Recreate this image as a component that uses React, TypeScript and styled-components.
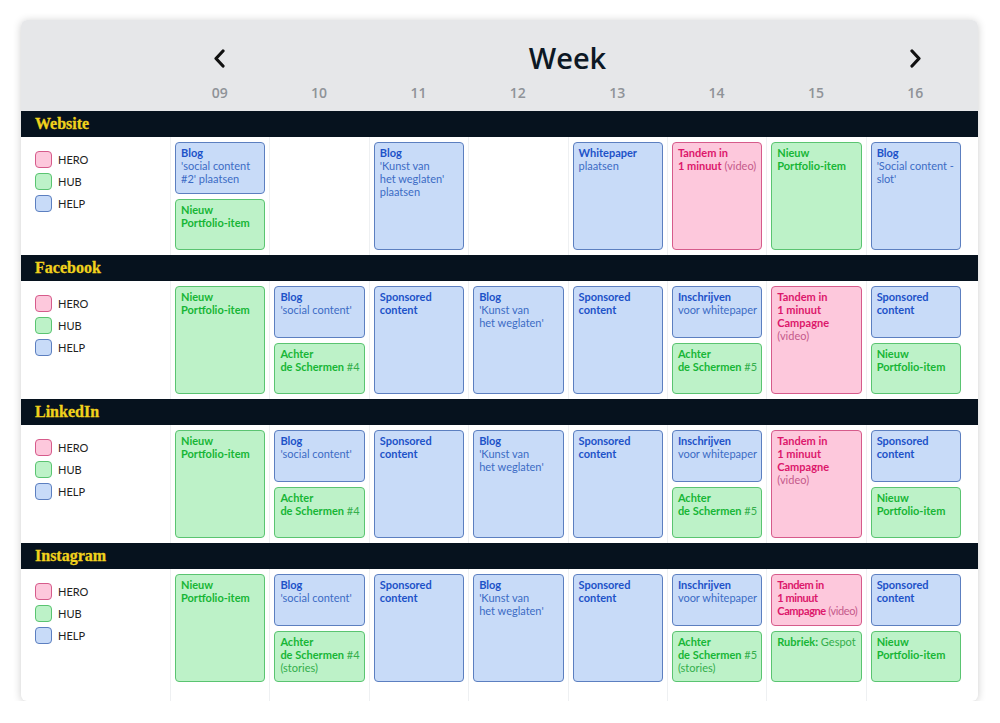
import styled, { createGlobalStyle } from "styled-components";

type Kind = "hero" | "hub" | "help";

interface Item {
  kind: Kind;
  text: string; // lines split by \n, **bold** segments
  tight?: boolean;
}

const palette: Record<Kind, { bg: string; border: string; strong: string; text: string }> = {
  hero: { bg: "#fdc8dc", border: "#d65b8b", strong: "#dc176b", text: "#c55a8b" },
  hub: { bg: "#bdf2c8", border: "#5ac471", strong: "#17b636", text: "#33ae4b" },
  help: { bg: "#c8dbf8", border: "#5c7fc0", strong: "#1d52c8", text: "#3c6bc5" },
};

const weeks = ["09", "10", "11", "12", "13", "14", "15", "16"];

const portfolio: Item = { kind: "hub", text: "**Nieuw**\n**Portfolio-item**" };
const sponsored: Item = { kind: "help", text: "**Sponsored**\n**content**" };
const blogSocial: Item = { kind: "help", text: "**Blog**\n'social content'" };
const blogKunst: Item = { kind: "help", text: "**Blog**\n'Kunst van\nhet weglaten'" };
const inschrijven: Item = { kind: "help", text: "**Inschrijven**\nvoor whitepaper" };

const social: Item[][] = [
  [portfolio],
  [blogSocial, { kind: "hub", text: "**Achter**\n**de Schermen** #4" }],
  [sponsored],
  [blogKunst],
  [sponsored],
  [inschrijven, { kind: "hub", text: "**Achter**\n**de Schermen** #5" }],
  [{ kind: "hero", text: "**Tandem in**\n**1 minuut**\n**Campagne**\n(video)" }],
  [sponsored, portfolio],
];

const channels: { name: string; cells: Item[][] }[] = [
  {
    name: "Website",
    cells: [
      [{ kind: "help", text: "**Blog**\n'social content\n#2' plaatsen" }, portfolio],
      [],
      [{ kind: "help", text: "**Blog**\n'Kunst van\nhet weglaten'\nplaatsen" }],
      [],
      [{ kind: "help", text: "**Whitepaper**\nplaatsen" }],
      [{ kind: "hero", text: "**Tandem in**\n**1 minuut** (video)" }],
      [portfolio],
      [{ kind: "help", text: "**Blog**\n'Social content -\nslot'" }],
    ],
  },
  { name: "Facebook", cells: social },
  { name: "LinkedIn", cells: social },
  {
    name: "Instagram",
    cells: [
      [portfolio],
      [blogSocial, { kind: "hub", text: "**Achter**\n**de Schermen** #4\n(stories)" }],
      [sponsored],
      [blogKunst],
      [sponsored],
      [inschrijven, { kind: "hub", text: "**Achter**\n**de Schermen** #5\n(stories)" }],
      [
        { kind: "hero", text: "**Tandem in**\n**1 minuut**\n**Campagne** (video)", tight: true },
        { kind: "hub", text: "**Rubriek:** Gespot" },
      ],
      [sponsored, portfolio],
    ],
  },
];

const GlobalStyle = createGlobalStyle`
  body {
    margin: 0;
    background: #ffffff;
    font-family: Lato, "Liberation Sans", sans-serif;
  }
`;

const COLUMNS = "149px repeat(8, minmax(0, 1fr)) 13px";

const Frame = styled.div`
  width: 957px;
  margin: 20px 0 0 21px;
  background: #fff;
  border-radius: 6px;
  box-shadow: 0 1px 8px rgba(0, 0, 0, 0.2);
  overflow: hidden;
`;

const Header = styled.div`
  display: grid;
  grid-template-columns: ${COLUMNS};
  grid-template-rows: 36px 18px;
  row-gap: 8px;
  padding: 20px 0 9px;
  background: #e6e7e9;
`;

const Nav = styled.div<{ $col: number }>`
  grid-row: 1;
  grid-column: ${(p) => p.$col};
  display: flex;
  align-items: center;
  justify-content: center;
`;

const Title = styled.h1`
  grid-row: 1;
  grid-column: 3 / 9;
  margin: 0;
  text-align: center;
  font: 600 29px/36px "Open Sans", sans-serif;
  color: #0d1824;
`;

const WeekNo = styled.div<{ $col: number }>`
  grid-row: 2;
  grid-column: ${(p) => p.$col};
  text-align: center;
  font: 600 14px/18px "Open Sans", sans-serif;
  color: #8f9398;
`;

const Band = styled.div`
  height: 26px;
  padding-left: 14px;
  display: flex;
  align-items: center;
  background: #06121e;
  color: #f1d21c;
  font: 700 16px "Liberation Serif", serif;
  -webkit-text-stroke: 0.3px #f1d21c;
`;

const Body = styled.div<{ $last?: boolean }>`
  display: grid;
  grid-template-columns: ${COLUMNS};
  height: ${(p) => (p.$last ? 132 : 118)}px;
`;

const Legend = styled.div`
  display: flex;
  flex-direction: column;
  gap: 5px;
  padding: 14px 0 0 14px;
`;

const LegendRow = styled.div`
  display: flex;
  align-items: center;
  gap: 6px;
  font-size: 11px;
  color: #222;
`;

const Swatch = styled.span<{ $kind: Kind }>`
  width: 17px;
  height: 17px;
  box-sizing: border-box;
  border-radius: 4px;
  background: ${(p) => palette[p.$kind].bg};
  border: 1.5px solid ${(p) => palette[p.$kind].border};
`;

const DayCell = styled.div<{ $last?: boolean }>`
  display: flex;
  flex-direction: column;
  gap: 5px;
  padding: 5px 4px ${(p) => (p.$last ? 19 : 5)}px 4px;
  border-left: 1px solid #eef0f2;
  min-height: 0;
  min-width: 0;
`;

const Card = styled.div<{ $kind: Kind; $tight?: boolean }>`
  flex: 1;
  min-height: 0;
  box-sizing: border-box;
  padding: 3px ${(p) => (p.$tight ? 2 : 4)}px 3px 5px;
  border-radius: 4px;
  background: ${(p) => palette[p.$kind].bg};
  border: 1.5px solid ${(p) => palette[p.$kind].border};
  color: ${(p) => palette[p.$kind].text};
  font-size: 11px;
  line-height: 13px;
  letter-spacing: ${(p) => (p.$tight ? "-0.4px" : "0")};
  white-space: nowrap;
  overflow: hidden;

  b {
    font-weight: 700;
    color: ${(p) => palette[p.$kind].strong};
  }
`;

const Chevron = ({ dir }: { dir: "left" | "right" }) => (
  <svg width="13" height="19" viewBox="0 0 13 19">
    <polyline
      points={dir === "left" ? "10,2 3,9.5 10,17" : "3,2 10,9.5 3,17"}
      fill="none"
      stroke="#111"
      strokeWidth="3.2"
      strokeLinecap="round"
      strokeLinejoin="round"
    />
  </svg>
);

const renderText = (text: string) =>
  text.split("\n").map((line, i) => (
    <div key={i}>
      {line.split("**").map((seg, j) => (j % 2 === 1 ? <b key={j}>{seg}</b> : seg))}
    </div>
  ));

const legend: { kind: Kind; label: string }[] = [
  { kind: "hero", label: "HERO" },
  { kind: "hub", label: "HUB" },
  { kind: "help", label: "HELP" },
];

export default function App() {
  return (
    <>
      <GlobalStyle />
      <Frame>
        <Header>
          <Nav $col={2}>
            <Chevron dir="left" />
          </Nav>
          <Title>Week</Title>
          <Nav $col={9}>
            <Chevron dir="right" />
          </Nav>
          {weeks.map((w, i) => (
            <WeekNo key={w} $col={i + 2}>
              {w}
            </WeekNo>
          ))}
        </Header>
        {channels.map((ch, ci) => {
          const last = ci === channels.length - 1;
          return (
            <section key={ch.name}>
              <Band>{ch.name}</Band>
              <Body $last={last}>
                <Legend>
                  {legend.map((l) => (
                    <LegendRow key={l.label}>
                      <Swatch $kind={l.kind} />
                      {l.label}
                    </LegendRow>
                  ))}
                </Legend>
                {ch.cells.map((cell, i) => (
                  <DayCell key={i} $last={last}>
                    {cell.map((item, k) => (
                      <Card key={k} $kind={item.kind} $tight={item.tight}>
                        {renderText(item.text)}
                      </Card>
                    ))}
                  </DayCell>
                ))}
              </Body>
            </section>
          );
        })}
      </Frame>
    </>
  );
}
